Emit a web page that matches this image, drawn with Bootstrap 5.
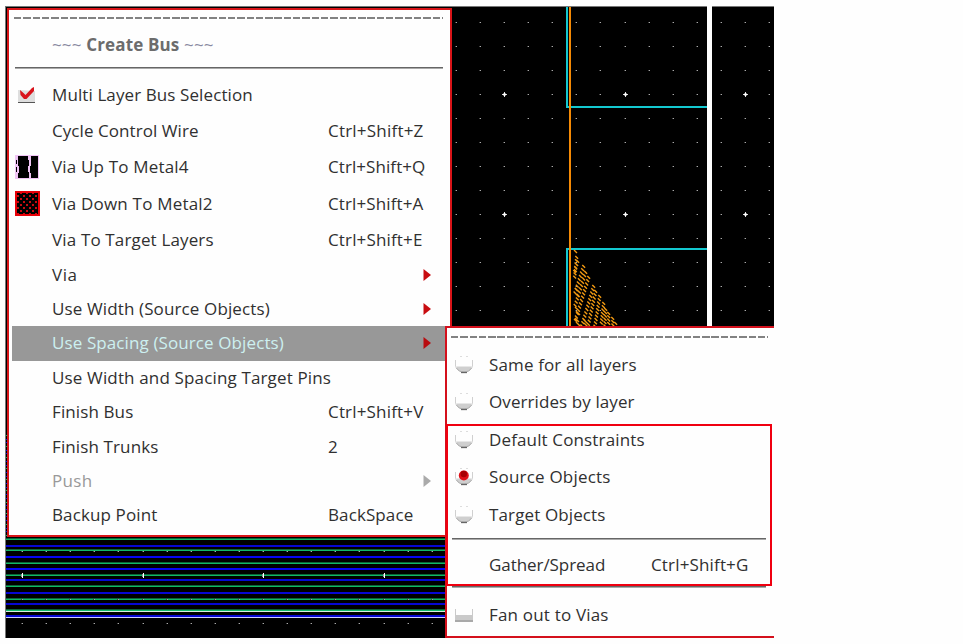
<!DOCTYPE html>
<html lang="en">
<head>
<meta charset="utf-8">
<title>Create Bus</title>
<meta name="viewport" content="width=device-width, initial-scale=1">
<link href="https://cdn.jsdelivr.net/npm/bootstrap@5.3.0/dist/css/bootstrap.min.css" rel="stylesheet">
<style>
body{background:#fefefe;font-family:"Open Sans","Noto Sans",sans-serif;font-size:17px;line-height:22px;color:#303030;width:963px;height:644px}
.layout-canvas{left:0;top:0}
.popup{background:#fefefe}
.main-menu{left:7px;top:8px;width:445px;height:529px;border:2px solid #d81418;padding:0 7px 0 3px}
.sub-menu{left:445px;top:326px;width:329px;height:312px;border:2px solid #d4101c;border-right:0;padding-left:5px}
.tear{height:2px;background:repeating-linear-gradient(90deg,#828282 0 7.4px,transparent 7.4px 9.3px)}
.rule{height:2px;background:linear-gradient(#666 50%,#aaa 50%)}
.main-menu .tear{margin:7px 0 0 2px;width:429px;flex:none}
.main-menu .rule{margin:0 0 8px 3px;width:428px;flex:none}
.caption-row{height:48px;padding:4px 0 0 40px;color:#6c6c6c;font-weight:700;flex:none}
.tilde{color:#8888a0;font-weight:400}
.item{flex:none;height:34.4px}
.h36{height:36px}.h37{height:37px}.h35{height:35.5px}
.glyph{width:40px;padding-left:3px;flex:none;line-height:0}
.main-menu .glyph{padding-bottom:1px}
.item-label{width:276px;white-space:nowrap;flex:none}
.keys{width:95px;white-space:nowrap;flex:none}
.arrow-cell{width:103px;text-align:right;line-height:0;flex:none}
.picked{background:#989898;color:#cdf0f0;margin-right:-7px}
.off{color:#999}
.sub-menu .item{height:37.5px}
.sub-menu .glyph{width:37px;padding-left:3px}
.sub-menu .item-label{width:162px}
.sub-menu .tear{width:317px;margin:8px 0 8px 0;margin-left:-1px;flex:none}
.sub-menu .rule{width:314px;flex:none}
.sub-menu .tall{height:46.5px}
.frame-mark{left:446px;top:424px;width:326px;height:162px;border:2px solid #f00010}
</style>
<script src="https://cdn.jsdelivr.net/npm/bootstrap@5.3.0/dist/js/bootstrap.bundle.min.js"></script>
</head>
<body class="position-relative overflow-hidden m-0">
<svg class="layout-canvas position-absolute" width="963" height="644" shape-rendering="crispEdges">
  <rect x="5.5" y="6" width="768.5" height="632"/>
  <path d="M5 6.5H774M5.5 7V638" stroke="#777"/>
  <g id="wires"></g>
  <g id="dots"></g>
  <rect x="707" y="6" width="5" height="322" fill="#fefefe"/>
  <path d="M567 7V107H707M567 326V249H707" fill="none" stroke="#13c9d0" stroke-width="2"/>
  <path d="M570 7V326" stroke="#f58a05" stroke-width="2"/>
  <path id="hatch" fill="none" stroke="#f39a12" stroke-width="1.4" shape-rendering="auto"/>
</svg>

<svg class="d-none">
  <symbol id="arrow" viewBox="0 0 8 12"><path d="M.5 0L8 6L.5 12Z"/></symbol>
  <symbol id="radio" viewBox="0 0 18 18"><path d="M.5 4V10.500C2 14 5 16 9 16S16 14 17.500 10.500V4" fill="none" stroke="#d0d0d0"/><path d="M1 10.500H17C15.500 14 13 16 9 16S2.500 14 1 10.500Z" fill="#cfcfcf"/><path d="M1.500 12C3 14.500 5.500 16 9 16S15 14.500 16.500 12" fill="none" stroke="#aaa"/><path d="M6 16.500H12" stroke="#666" stroke-width="1.300"/><path d="M5 .5H7M11 .5H13" stroke="#ddd"/></symbol>
</svg>

<nav class="popup main-menu position-absolute d-flex flex-column" id="mainMenu">
  <div class="tear"></div>
  <div class="caption-row d-flex align-items-center"><span data-w="161"><span class="tilde">~~~</span> Create Bus <span class="tilde">~~~</span></span></div>
  <div class="rule"></div>
  <div class="item h36 d-flex align-items-center"><span class="glyph"><svg width="20" height="18"><path d="M3 4V17H20V5" fill="#dedede"/><path d="M3 16.500H20" stroke="#555"/><path d="M5 4L8.500 7L10.500 9L17 2L19 1V5L11.500 13H9L5.500 9Z" fill="#d9141c"/></svg></span><span class="item-label"><span data-w="200">Multi Layer Bus Selection</span></span></div>
  <div class="item h36 d-flex align-items-center"><span class="glyph"></span><span class="item-label"><span data-w="146">Cycle Control Wire</span></span><span class="keys"><span data-w="95">Ctrl+Shift+Z</span></span></div>
  <div class="item h36 d-flex align-items-center"><span class="glyph"><svg width="24" height="24"><path fill="#f0c4f5" d="M0 0H24V24H0Z"/><path d="M3 1H13V5H14V11H13V17H14V23H3V18H4V11H3ZM16 1H23V23H16V18H15V11H16ZM1 5H2V9H1ZM1 12H2V17H1Z"/></svg></span><span class="item-label"><span data-w="136">Via Up To Metal4</span></span><span class="keys"><span data-w="97">Ctrl+Shift+Q</span></span></div>
  <div class="item h37 d-flex align-items-center"><span class="glyph"><svg width="25" height="25" shape-rendering="crispEdges"><defs><pattern id="dotfill" x="1" y="3" width="6" height="6" patternUnits="userSpaceOnUse"><path d="M0 0H6V6H0Z"/><path d="M1 1H3V3H1ZM4 4H6V6H4Z" fill="#c80a10"/></pattern></defs><rect x="1" y="1" width="23" height="23" fill="url(#dotfill)" stroke="#e80008" stroke-width="2"/></svg></span><span class="item-label"><span data-w="160">Via Down To Metal2</span></span><span class="keys"><span data-w="95">Ctrl+Shift+A</span></span></div>
  <div class="item h35 d-flex align-items-center"><span class="glyph"></span><span class="item-label"><span data-w="161">Via To Target Layers</span></span><span class="keys"><span data-w="94">Ctrl+Shift+E</span></span></div>
  <div class="item d-flex align-items-center"><span class="glyph"></span><span class="item-label"><span data-w="25">Via</span></span><span class="arrow-cell"><svg width="8" height="12" fill="#c80c10"><use href="#arrow"/></svg></span></div>
  <div class="item d-flex align-items-center"><span class="glyph"></span><span class="item-label"><span data-w="217">Use Width (Source Objects)</span></span><span class="arrow-cell"><svg width="8" height="12" fill="#c80c10"><use href="#arrow"/></svg></span></div>
  <div class="item picked d-flex align-items-center"><span class="glyph"></span><span class="item-label"><span data-w="231">Use Spacing (Source Objects)</span></span><span class="arrow-cell"><svg width="8" height="12" fill="#b80c10"><use href="#arrow"/></svg></span></div>
  <div class="item d-flex align-items-center"><span class="glyph"></span><span class="item-label"><span data-w="278">Use Width and Spacing Target Pins</span></span></div>
  <div class="item d-flex align-items-center"><span class="glyph"></span><span class="item-label"><span data-w="81">Finish Bus</span></span><span class="keys"><span data-w="95">Ctrl+Shift+V</span></span></div>
  <div class="item d-flex align-items-center"><span class="glyph"></span><span class="item-label"><span data-w="106">Finish Trunks</span></span><span class="keys">2</span></div>
  <div class="item off d-flex align-items-center"><span class="glyph"></span><span class="item-label"><span data-w="40">Push</span></span><span class="arrow-cell"><svg width="8" height="12" fill="#aaa"><use href="#arrow"/></svg></span></div>
  <div class="item d-flex align-items-center"><span class="glyph"></span><span class="item-label"><span data-w="105">Backup Point</span></span><span class="keys"><span data-w="85">BackSpace</span></span></div>
</nav>

<nav class="popup sub-menu position-absolute d-flex flex-column">
  <div class="tear"></div>
  <div class="item d-flex align-items-center"><span class="glyph"><svg width="18" height="18"><use href="#radio"/></svg></span><span class="item-label"><span data-w="147">Same for all layers</span></span></div>
  <div class="item d-flex align-items-center"><span class="glyph"><svg width="18" height="18"><use href="#radio"/></svg></span><span class="item-label"><span data-w="145">Overrides by layer</span></span></div>
  <div class="item d-flex align-items-center"><span class="glyph"><svg width="18" height="18"><use href="#radio"/></svg></span><span class="item-label"><span data-w="155">Default Constraints</span></span></div>
  <div class="item d-flex align-items-center"><span class="glyph"><svg width="18" height="18"><use href="#radio"/><circle cx="8.800" cy="7.500" r="5" fill="#e01018"/><circle cx="8.800" cy="6" r="3.200" fill="#a80004"/></svg></span><span class="item-label"><span data-w="121">Source Objects</span></span></div>
  <div class="item d-flex align-items-center"><span class="glyph"><svg width="18" height="18"><use href="#radio"/></svg></span><span class="item-label"><span data-w="116">Target Objects</span></span></div>
  <div class="rule mt-1"></div>
  <div class="item tall d-flex align-items-center pt-1"><span class="glyph"></span><span class="item-label"><span data-w="116">Gather/Spread</span></span><span class="keys"><span data-w="97">Ctrl+Shift+G</span></span></div>
  <div class="rule"></div>
  <div class="item tall d-flex align-items-center pt-2"><span class="glyph"><svg width="18" height="13"><path d="M0 0H1V6H17V0H18V11H0Z" fill="#cacaca"/><path d="M0 12H18" stroke="#555"/></svg></span><span class="item-label"><span data-w="119">Fan out to Vias</span></span></div>
</nav>
<div class="frame-mark position-absolute"></div>

<script>
const NS='http://www.w3.org/2000/svg';
function box(g,x,y,w,h,c){const r=document.createElementNS(NS,'rect');
  for(const [k,v] of Object.entries({x,y,width:w,height:h,fill:c}))r.setAttribute(k,v);g.append(r);}
const wires=document.getElementById('wires'),dots=document.getElementById('dots');
[545,556,568,579,592,603,615].forEach(y=>box(wires,6,y,440,2,y===556||y===568?'#0606f4':'#0606d4'));
[538,549,562,574,585,598,609].forEach(y=>{box(wires,6,y,440,1,'#0a6338');box(wires,6,y+1,440,1,'#10b866');});
box(wires,6,611,440,1,'#dcebe2');box(wires,6,617,440,1,'#cfd0ff');
for(let y=435,i=0;y<537;y+=3.7,i++)box(wires,6,Math.round(y),1,1,i%3?'#0808e8':'#10b866');
// minor grid step is a fifth of the major one
for(let i=-1;i<32;i++)for(let j=-3;j<23;j++){
  const x=Math.round(22.5+i*24.1-.5),y=Math.round(94.5+j*24.05-.5);
  if(x<8||x>772||y<8||y>632||(y>560&&y<590&&i%5))continue;
  if(i%5===0&&j%5===0){
    if(y>560){box(dots,x,y-2,1,5,'#fff');box(dots,x-1,y-1,1,3,'#999');}
    else{box(dots,x-2,y,5,1,'#ddd');box(dots,x,y-2,1,5,'#ddd');box(dots,x-1,y,3,1,'#fff');box(dots,x,y-1,1,3,'#fff');box(dots,x-1,y-1,3,3,'rgba(255,255,255,.45)');}
  }else{box(dots,x,y,1,1,'#aaa');box(dots,x-1,y,1,1,'#444');}
}
// via stipple: short strokes stacked along steepening streaks
let d='M574 250l3 3';
const streaks=[[577,256,-.1],[578,260,-.3],[584,265,-.33],[586,271,-.32],[589,276,-.31],[594,285,-.3],[596,290,-.22],[600,295,-.16],[604,302,-.12],[606,308,-.05],[609,312,0],[613,317,.03],[616,322,.05]];
for(const [sx,sy,k] of streaks){
  const end=sy===256?276:325;
  for(let y=sy;y<end;y+=3.3){const x=sx+(y-sy)*k;if(x<575)break;d+=`M${(x-1.7).toFixed(1)} ${y.toFixed(1)}l2.8 2.8`;}
}
for(const [x,y] of [[575,288],[575,293],[575,307],[576,311],[575,318],[576,322],[583,319],[584,323]])d+=`M${x} ${y}l4 4`;
const hatch=document.getElementById('hatch');
hatch.setAttribute('d',d);
// spread each label over its nominal width
document.querySelectorAll('[data-w]').forEach(e=>{
  const w=e.getBoundingClientRect().width;
  e.style.letterSpacing=((e.dataset.w-w)/(e.textContent.length-1)+.03)+'px';
});
</script>
</body>
</html>
